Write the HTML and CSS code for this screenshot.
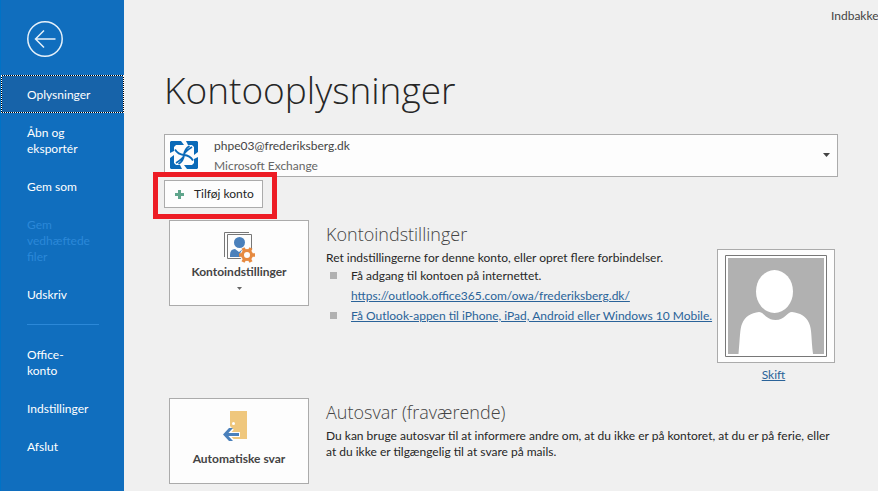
FILE: index.html
```html
<!DOCTYPE html>
<html lang="da">
<head>
<meta charset="utf-8">
<meta name="viewport" content="width=device-width, initial-scale=1">
<title>Kontooplysninger</title>
<link rel="stylesheet" href="styles.css">
</head>
<body>
<div class="app">
  <nav class="sidebar" aria-label="Filer">
    <button class="back" type="button" aria-label="Tilbage">
      <svg width="38" height="38" viewBox="0 0 38 38" fill="none" stroke="#e6f1fa" stroke-width="1.5">
        <circle cx="19" cy="19" r="17.2"/>
        <path d="M29.500 19H10M18 10.500L9.500 19l8.500 8.500"/>
      </svg>
    </button>
    <a class="item active" href="#">Oplysninger</a>
    <a class="item" href="#">Åbn og eksportér</a>
    <a class="item" href="#">Gem som</a>
    <a class="item disabled" aria-disabled="true">Gem vedhæftede filer</a>
    <a class="item" href="#">Udskriv</a>
    <hr class="divider">
    <a class="item" href="#">Office-<br>konto</a>
    <a class="item" href="#">Indstillinger</a>
    <a class="item" href="#">Afslut</a>
  </nav>

  <main class="main">
    <div class="window-title">Indbakke</div>
    <h1 class="title">Kontooplysninger</h1>

    <div class="account">
      <select class="account-select" aria-label="Konto">
        <option>phpe03@frederiksberg.dk</option>
      </select>
      <svg class="account-logo" width="28" height="28" viewBox="0 0 28 28">
        <g fill="#0a6ab8">
          <path d="M1 0h10l3 4H6L4 6v4l-4 2V1z"/>
          <path d="M27 0l1 1v10l-4 3V6l-2-2h-4l-2-4z"/>
          <path d="M28 27l-1 1H17l-3-4h8l2-2v-4l4-2z"/>
          <path d="M1 28l-1-1V17l4-3v8l2 2h4l2 4z"/>
        </g>
        <path fill="none" stroke="#0a6ab8" stroke-width="1.800" d="M5 8.500Q8 13.500 14 14t9 5.500M19.500 5Q14.500 8 14 14t-5.500 9M22 6Q14 11 14 14t-8 8"/>
      </svg>
      <span class="account-type">Microsoft Exchange</span>
      <svg class="account-arrow" width="7" height="4" viewBox="0 0 7 4"><path fill="#444" d="M0 0h7L3.500 4z"/></svg>
    </div>

    <div class="add">
      <button class="add-button" type="button">
        <svg width="9" height="9" viewBox="0 0 9 9"><path fill="#5fa58c" d="M3 0h3v3h3v3H6v3H3V6H0V3h3z"/></svg>
        Tilføj konto
      </button>
    </div>

    <section class="row">
      <button class="tile" type="button">
        <svg width="32" height="32" viewBox="0 0 32 32">
          <path fill="none" stroke="#777" d="M1.500 25V.5H26"/>
          <path fill="#fdfdfd" stroke="#777" d="M4.500 2.500h24v24h-24z"/>
          <circle cx="16.500" cy="10.500" r="5.500" fill="#4a80bb"/>
          <path fill="#4a80bb" d="M7 25v-2q0-6 5-6l4 3 4-3 2 8z"/>
          <circle cx="24" cy="23" r="7" fill="#fdfdfd"/>
          <g stroke="#e68a41" fill="none">
            <circle cx="24" cy="23" r="4.500" stroke-width="3"/>
            <path stroke-width="3.500" d="M16 23h3M29 23h3M20 16l1.500 2.600M28 30l-1.500-2.600M28 16l-1.500 2.600M20 30l1.500-2.600"/>
          </g>
        </svg>
        <span>Kontoindstillinger</span>
        <svg class="tile-arrow" width="5" height="3" viewBox="0 0 5 3"><path fill="#666" d="M0 0h5L2.500 3z"/></svg>
      </button>
      <div class="text">
        <h2>Kontoindstillinger</h2>
        <p>Ret indstillingerne for denne konto, eller opret flere forbindelser.</p>
        <ul>
          <li>Få adgang til kontoen på internettet.<br><a href="#">https://outlook.office365.com/owa/frederiksberg.dk/</a></li>
          <li><a href="#">Få Outlook-appen til iPhone, iPad, Android eller Windows 10 Mobile.</a></li>
        </ul>
      </div>
      <div class="photo">
        <div class="frame">
          <svg width="102" height="102" viewBox="0 0 102 102">
            <path fill="#fff" stroke="#777" d="M.5.5h101v101H.5z"/>
            <path fill="#b1b1b1" d="M3 3h96v96H3z"/>
            <ellipse cx="49.500" cy="36.500" rx="18.500" ry="21.500" fill="#fff"/>
            <path fill="#fff" d="M13.500 99C15 83 15 73 17 69c3-8 9-11 17-12 5 0 7 8 16.500 8S62 57 67 57c8 1 14 4 17 11 3 6 2 15 4 31z"/>
          </svg>
        </div>
        <a href="#">Skift</a>
      </div>
    </section>

    <section class="row">
      <button class="tile" type="button">
        <svg width="32" height="32" viewBox="0 0 32 32">
          <path fill="#efc77d" d="M7 1h17v28H7z"/>
          <circle cx="10.500" cy="13.500" r="1.500" fill="#fff"/>
          <path fill="none" stroke="#fdfdfd" stroke-width="5" d="M17 24.500H3M9 18l-6.500 6.500L9 31"/>
          <path fill="none" stroke="#4a80bb" stroke-width="3" d="M16 24.500H2"/>
          <path fill="#4a80bb" d="M6 18h4l-6 6.500 6 6.500H6l-6-6.500z"/>
        </svg>
        <span>Automatiske svar</span>
      </button>
      <div class="text">
        <h2>Autosvar (fraværende)</h2>
        <p>Du kan bruge autosvar til at informere andre om, at du ikke er på kontoret, at du er på ferie, eller at du ikke er tilgængelig til at svare på mails.</p>
      </div>
    </section>
  </main>
</div>
</body>
</html>
```
FILE: styles.css
```css
* { box-sizing: border-box; }

body {
  margin: 0;
  background: #f0f0f0;
  color: #262626;
  font: 12px/16px Lato, "Open Sans", sans-serif;
}

button, select { font: inherit; color: inherit; }
h1, h2, p, ul { margin: 0; padding: 0; }
svg { display: block; }

.app {
  display: flex;
  min-height: 100vh;
}

/* Sidebar */
.sidebar {
  flex: none;
  width: 124px;
  background: #106ebe;
  border-left: 1px solid #0072c6;
}

.back {
  display: block;
  margin: 20px 0 17px 25px;
  padding: 0;
  border: 0;
  background: none;
}

.item {
  display: block;
  padding: 12px 30px 10px 26px;
  color: #fff;
  text-decoration: none;
}

.item.active {
  padding: 11px 24px 9px 25px;
  border: 1px dotted #fff;
  background:
    linear-gradient(#1763a9, #1763a9) padding-box,
    linear-gradient(#000, #000) border-box;
}

.item.disabled { color: #2b88d8; }

.divider {
  height: 1px;
  margin: 11px 25px 10px 26px;
  border: 0;
  background: #2b88d8;
}

/* Content */
.main {
  flex: 1;
  min-width: 0;
  padding: 8px 40px 0;
  overflow: hidden;
}

.window-title {
  width: 47px;
  margin: 0 -40px 0 auto;
  color: #444;
}

.title {
  margin: 38px 0 16px;
  font-family: "Open Sans", sans-serif;
  font-size: 37px;
  line-height: 56px;
  font-weight: 300;
}

.account {
  position: relative;
  color: #444;
}

.account-select {
  display: block;
  width: 100%;
  height: 43px;
  padding: 0 24px 19px 49px;
  border: 1px solid #ababab;
  border-radius: 0;
  background: #fdfdfd;
  appearance: none;
}

.account-logo, .account-type, .account-arrow {
  position: absolute;
  pointer-events: none;
}

.account-logo { left: 6px; top: 7px; }
.account-type { left: 50px; top: 24px; color: #666; }
.account-arrow { right: 8px; top: 19px; }

.add {
  position: relative;
  width: fit-content;
  margin: 3px 0 12px;
}

.add::after {
  content: "";
  position: absolute;
  inset: -8px -14px -11px -11px;
  border: 5px solid #ed1c24;
  pointer-events: none;
}

.add-button {
  display: flex;
  align-items: center;
  gap: 10px;
  height: 28px;
  padding: 0 8px 0 10px;
  border: 1px solid #ababab;
  background: #fdfdfd;
}

.row {
  display: flex;
  align-items: flex-start;
  min-height: 178px;
  padding: 0 3px 0 5px;
}

.row:last-child { min-height: 0; }

.tile {
  display: flex;
  flex: none;
  flex-direction: column;
  align-items: center;
  width: 140px;
  height: 86px;
  padding: 11px 0 0;
  border: 1px solid #ababab;
  background: #fdfdfd;
  color: #444;
  font-weight: 700;
}

.tile span { white-space: nowrap; }
.tile-arrow { margin-top: 7px; }

.tile span:last-child { margin-top: 9px; }

.text {
  flex: 1;
  min-width: 0;
  padding-left: 17px;
}

.text h2 {
  margin: 2px 0 4px;
  color: #444;
  font-family: "Open Sans", sans-serif;
  font-size: 18px;
  line-height: 24px;
  font-weight: 300;
}

ul { list-style: none; }

li {
  position: relative;
  padding-left: 25px;
  line-height: 20px;
  white-space: nowrap;
}

li::before {
  content: "";
  position: absolute;
  left: 4px;
  top: 6px;
  width: 7px;
  height: 7px;
  background: #b1b1b1;
}

.text a, .photo a { color: #2a6399; }

.photo {
  flex: none;
  margin-top: 29px;
  text-align: center;
}

.photo a {
  display: inline-block;
  margin: 4px 5px 0 0;
}

.frame {
  padding: 5px 7px;
  border: 1px solid #ababab;
  background: #fdfdfd;
}
```
